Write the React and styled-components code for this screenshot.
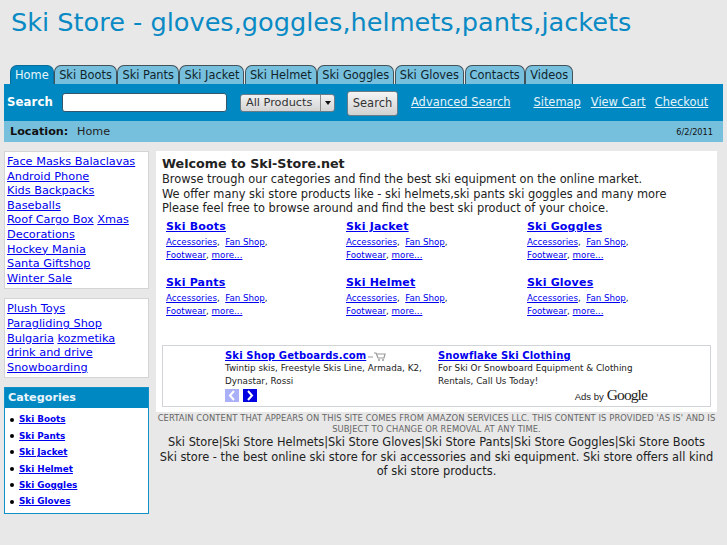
import React from "react";
import styled, { createGlobalStyle } from "styled-components";

const Global = createGlobalStyle`
  html, body { margin: 0; padding: 0; background: #e8e8e8; }
  body { font-family: "DejaVu Sans", sans-serif; font-size: 11.4px; color: #222; width: 727px; height: 545px; overflow: hidden; }
  a { color: #0000ee; }
`;

const Page = styled.div`
  padding: 0 4px;
  width: 727px;
  box-sizing: border-box;
`;

const Title = styled.h1`
  margin: 0;
  padding: 5px 0 0 7px;
  height: 65px;
  box-sizing: border-box;
  font-size: 25.6px;
  line-height: 34px;
  font-weight: normal;
  color: #0a8ac4;
  white-space: nowrap;
`;

const Tabs = styled.div`
  display: flex;
  padding-left: 6px;
  height: 19px;
  gap: 0.5px;
`;

const Tab = styled.div`
  height: 19px;
  box-sizing: border-box;
  padding: 1px 4px 0;
  line-height: 17px;
  font-size: 11.4px;
  white-space: nowrap;
  color: ${(p) => (p.$active ? "#eaf6fb" : "#10242c")};
  background: ${(p) => (p.$active ? "#0088c2" : "#76c0de")};
  border: 1px solid ${(p) => (p.$active ? "#0a6c98" : "#44535a")};
  border-bottom: 0;
  border-radius: 7px 7px 0 0;
`;

const SearchBar = styled.div`
  display: flex;
  align-items: center;
  height: 37px;
  background: #0088c2;
  color: #fff;
  padding: 0 0 0 3px;
`;

const SearchLabel = styled.b`
  font-size: 11.7px;
  letter-spacing: 0.1px;
  width: 55px;
  flex: none;
  margin-top: -2px;
`;

const SearchInput = styled.div`
  width: 165px;
  height: 19px;
  box-sizing: border-box;
  flex: none;
  background: #fff;
  border: 1px solid #33566a;
  border-radius: 3px;
  margin-right: 13px;
`;

const Select = styled.div`
  display: flex;
  height: 18px;
  width: 95px;
  flex: none;
  box-sizing: border-box;
  border: 1px solid #6a7c86;
  border-radius: 3px;
  background: linear-gradient(#f2f2f2, #d4d4d4);
  color: #333;
  font-size: 11.3px;
  line-height: 16px;
  margin-right: 12px;
`;

const SelectText = styled.span`
  flex: 1;
  padding-left: 5px;
  white-space: nowrap;
`;

const SelectArrow = styled.span`
  width: 13px;
  border-left: 1px solid #8a8a8a;
  display: flex;
  align-items: center;
  justify-content: center;
  &::after {
    content: "";
    border: 3.5px solid transparent;
    border-top: 4px solid #111;
    border-bottom: 0;
  }
`;

const SearchButton = styled.div`
  width: 51px;
  height: 25px;
  flex: none;
  box-sizing: border-box;
  border: 1px solid #6a7c86;
  border-radius: 3px;
  background: linear-gradient(#f4f4f4, #d2d2d2);
  color: #333;
  font-size: 11.5px;
  line-height: 23px;
  text-align: center;
  margin: 1px 13px 0 0;
`;

const BarLink = styled.a`
  color: #e6f4fb;
  font-size: 11.45px;
  white-space: nowrap;
  margin-right: ${(p) => p.$gap || 0}px;
  margin-top: -2px;
  text-decoration: underline;
`;

const LocationBar = styled.div`
  display: flex;
  align-items: center;
  height: 21px;
  background: #76c0de;
  padding: 0 10px 0 6px;
  color: #222;
`;

const LocationLabel = styled.b`
  font-size: 11.2px;
  width: 67px;
  color: #111;
`;

const LocationText = styled.span`
  flex: 1;
  font-size: 11.2px;
`;

const DateText = styled.span`
  font-size: 8.2px;
  color: #111;
`;

const Columns = styled.div`
  display: flex;
  margin-top: 9px;
  gap: 7px;
  align-items: flex-start;
`;

const Sidebar = styled.aside`
  width: 145px;
  flex: none;
  display: flex;
  flex-direction: column;
  gap: 9px;
`;

const LinkBox = styled.div`
  background: #fff;
  border: 1px solid #d4d4d4;
  padding: 3px 2px 2px;
  font-size: 11.3px;
  line-height: 14.6px;
`;

const CategoryBox = styled.div`
  border: 1px solid #1490c8;
  background: #fff;
`;

const CategoryHead = styled.div`
  background: #0088c2;
  color: #eaf6fb;
  font-weight: bold;
  font-size: 11.2px;
  height: 20px;
  line-height: 19px;
  padding-left: 3px;
`;

const CategoryList = styled.ul`
  list-style: none;
  margin: 0;
  padding: 3px 0 3px 5px;
  font-size: 8.8px;
  font-weight: bold;
  line-height: 16.4px;
`;

const CategoryItem = styled.li`
  display: flex;
  align-items: center;
  gap: 5px;
  &::before {
    content: "";
    width: 4px;
    height: 4px;
    border-radius: 50%;
    background: #000;
  }
`;

const Main = styled.main`
  width: 561px;
  flex: none;
`;

const Panel = styled.div`
  background: #fff;
  padding: 4px 6px 0;
  height: 261px;
  box-sizing: border-box;
`;

const Welcome = styled.h2`
  margin: 0;
  font-size: 12.7px;
  line-height: 17px;
  color: #222;
`;

const Intro = styled.p`
  margin: 0;
  font-size: 11.4px;
  line-height: 14.7px;
  color: #222;
  white-space: nowrap;
`;

const ProductGrid = styled.div`
  display: grid;
  grid-template-columns: 180px 181px 180px;
  margin: 3px 0 0 4px;
  row-gap: 13px;
`;

const ProductName = styled.a`
  display: block;
  width: fit-content;
  font-size: 11px;
  letter-spacing: 0.2px;
  font-weight: bold;
  line-height: 16px;
  margin-bottom: 1px;
`;

const SubLinks = styled.div`
  font-size: 8.7px;
  line-height: 13px;
  width: 140px;
`;

const AdBox = styled.div`
  margin-top: 27px;
  height: 62px;
  box-sizing: border-box;
  background: #fff;
  border: 1px solid #d0d4d6;
  display: flex;
  padding: 3px 0 0 62px;
  position: relative;
`;

const AdColumn = styled.div`
  width: ${(p) => p.$w}px;
  flex: none;
  font-size: 8.8px;
  line-height: 12.6px;
  color: #222;
`;

const AdHead = styled.div`
  display: flex;
  align-items: center;
  gap: 2px;
  height: 13px;
`;

const AdTitle = styled.a`
  font-size: 10px;
  font-weight: bold;
  line-height: 13px;
  letter-spacing: 0.14px;
  white-space: nowrap;
`;

const AdNav = styled.div`
  position: absolute;
  left: 62px;
  bottom: 4px;
  display: flex;
  gap: 4px;
`;

const AdArrow = styled.span`
  width: 14px;
  height: 13px;
  background: ${(p) => (p.$off ? "#aab0f8" : "#0000e0")};
  display: flex;
  align-items: center;
  justify-content: center;
`;

const AdsBy = styled.div`
  position: absolute;
  right: 63px;
  bottom: 2px;
  display: flex;
  align-items: baseline;
  gap: 3px;
  font-family: "Liberation Sans", sans-serif;
  font-size: 9.5px;
  color: #222;
`;

const GoogleWord = styled.span`
  font-family: "Liberation Serif", serif;
  font-size: 15.5px;
  letter-spacing: -0.9px;
`;

const Disclaimer = styled.div`
  margin-top: 1px;
  font-size: 8.4px;
  line-height: 11px;
  text-align: center;
  color: #666;
  letter-spacing: 0.09px;
  width: 561px;
`;

const Footer = styled.div`
  font-size: 11.4px;
  line-height: 14.7px;
  text-align: center;
  color: #222;
  width: 561px;
`;

const tabs = ["Ski Boots", "Ski Pants", "Ski Jacket", "Ski Helmet", "Ski Goggles", "Ski Gloves", "Contacts", "Videos"];
const products = ["Ski Boots", "Ski Jacket", "Ski Goggles", "Ski Pants", "Ski Helmet", "Ski Gloves"];
const categories = ["Ski Boots", "Ski Pants", "Ski Jacket", "Ski Helmet", "Ski Goggles", "Ski Gloves"];

const Chevron = ({ left }) => (
  <svg width="8" height="11" viewBox="0 0 8 11">
    <path d={left ? "M6 1L2 5.5L6 10" : "M2 1L6 5.5L2 10"} fill="none" stroke="#fff" strokeWidth="2" />
  </svg>
);

const Cart = () => (
  <svg width="18" height="10" viewBox="0 0 18 10">
    <path d="M0 6H5M6 2H8L10 7H16L17 3H9" fill="none" stroke="#999" strokeWidth="1.2" />
    <circle cx="11" cy="9" r="1" fill="#999" />
    <circle cx="15" cy="9" r="1" fill="#999" />
  </svg>
);

export default function App() {
  return (
    <Page>
      <Global />
      <Title>Ski Store - gloves,goggles,helmets,pants,jackets</Title>
      <Tabs>
        <Tab $active>Home</Tab>
        {tabs.map((t) => <Tab key={t}>{t}</Tab>)}
      </Tabs>
      <SearchBar>
        <SearchLabel>Search</SearchLabel>
        <SearchInput />
        <Select>
          <SelectText>All Products</SelectText>
          <SelectArrow />
        </Select>
        <SearchButton>Search</SearchButton>
        <BarLink href="#" $gap={23}>Advanced Search</BarLink>
        <BarLink href="#" $gap={10}>Sitemap</BarLink>
        <BarLink href="#" $gap={9}>View Cart</BarLink>
        <BarLink href="#">Checkout</BarLink>
      </SearchBar>
      <LocationBar>
        <LocationLabel>Location:</LocationLabel>
        <LocationText>Home</LocationText>
        <DateText>6/2/2011</DateText>
      </LocationBar>
      <Columns>
        <Sidebar>
          <LinkBox>
            <a href="#">Face Masks Balaclavas</a><br />
            <a href="#">Android Phone</a><br />
            <a href="#">Kids Backpacks</a><br />
            <a href="#">Baseballs</a><br />
            <a href="#">Roof Cargo Box</a> <a href="#">Xmas Decorations</a><br />
            <a href="#">Hockey Mania</a><br />
            <a href="#">Santa Giftshop</a><br />
            <a href="#">Winter Sale</a>
          </LinkBox>
          <LinkBox>
            <a href="#">Plush Toys</a><br />
            <a href="#">Paragliding Shop</a><br />
            <a href="#">Bulgaria</a> <a href="#">kozmetika</a><br />
            <a href="#">drink and drive</a><br />
            <a href="#">Snowboarding</a>
          </LinkBox>
          <CategoryBox>
            <CategoryHead>Categories</CategoryHead>
            <CategoryList>
              {categories.map((c) => <CategoryItem key={c}><a href="#">{c}</a></CategoryItem>)}
            </CategoryList>
          </CategoryBox>
        </Sidebar>
        <Main>
          <Panel>
            <Welcome>Welcome to Ski-Store.net</Welcome>
            <Intro>
              Browse trough our categories and find the best ski equipment on the online market.<br />
              We offer many ski store products like - ski helmets,ski pants ski goggles and many more<br />
              Please feel free to browse around and find the best ski product of your choice.
            </Intro>
            <ProductGrid>
              {products.map((p) => (
                <div key={p}>
                  <ProductName href="#">{p}</ProductName>
                  <SubLinks>
                    <a href="#">Accessories</a>,&nbsp; <a href="#">Fan Shop</a>,<br />
                    <a href="#">Footwear</a>, <a href="#">more...</a>
                  </SubLinks>
                </div>
              ))}
            </ProductGrid>
            <AdBox>
              <AdColumn $w={213}>
                <AdHead><AdTitle href="#">Ski Shop Getboards.com</AdTitle><Cart /></AdHead>
                Twintip skis, Freestyle Skis Line, Armada, K2, Dynastar, Rossi
              </AdColumn>
              <AdColumn $w={210}>
                <AdHead><AdTitle href="#">Snowflake Ski Clothing</AdTitle></AdHead>
                For Ski Or Snowboard Equipment &amp; Clothing Rentals, Call Us Today!
              </AdColumn>
              <AdNav>
                <AdArrow $off><Chevron left /></AdArrow>
                <AdArrow><Chevron /></AdArrow>
              </AdNav>
              <AdsBy>Ads by <GoogleWord>Google</GoogleWord></AdsBy>
            </AdBox>
          </Panel>
          <Disclaimer>
            CERTAIN CONTENT THAT APPEARS ON THIS SITE COMES FROM AMAZON SERVICES LLC. THIS CONTENT IS PROVIDED 'AS IS' AND IS SUBJECT TO CHANGE OR REMOVAL AT ANY TIME.
          </Disclaimer>
          <Footer>
            Ski Store|Ski Store Helmets|Ski Store Gloves|Ski Store Pants|Ski Store Goggles|Ski Store Boots<br />
            Ski store - the best online ski store for ski accessories and ski equipment. Ski store offers all kind of ski store products.
          </Footer>
        </Main>
      </Columns>
    </Page>
  );
}
